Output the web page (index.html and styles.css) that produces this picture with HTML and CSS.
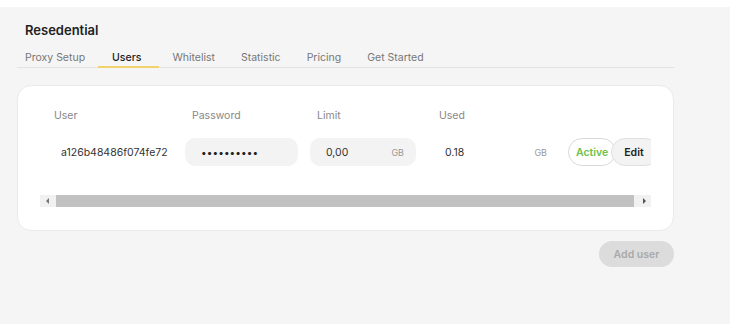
FILE: index.html
```html
<!DOCTYPE html>
<html lang="en">
<head>
    <meta charset="UTF-8">
    <meta name="viewport" content="width=device-width, initial-scale=1.0">
    <title>Resedential - Users</title>
    <link rel="stylesheet" href="styles.css">
</head>
<body>

    <div class="page">
        <div class="main">
            <!-- Titulo da secao -->
            <h2 class="title">Resedential</h2>

            <!-- Abas -->
            <nav class="tabs">
                <a class="tab first">Proxy Setup</a>
                <a class="tab active">Users</a>
                <a class="tab">Whitelist</a>
                <a class="tab">Statistic</a>
                <a class="tab">Pricing</a>
                <a class="tab">Get Started</a>
            </nav>

            <!-- Tabela de usuarios -->
            <div class="card">
                <div class="scroll">
                    <div class="table">
                        <div class="row head">
                            <div class="label">User</div>
                            <div class="label">Password</div>
                            <div class="label">Limit</div>
                            <div class="label">Used</div>
                            <div></div>
                        </div>
                        <div class="row">
                            <div class="cell user">a126b48486f074fe72</div>
                            <div class="cell field pass">••••••••••</div>
                            <div class="cell field limit">0,00 <span class="unit">GB</span></div>
                            <div class="cell used">0.18 <span class="unit">GB</span></div>
                            <div class="actions">
                                <button class="btn-active">Active</button>
                                <button class="btn-edit">Edit</button>
                            </div>
                        </div>
                    </div>
                </div>

                <!-- Barra de rolagem horizontal -->
                <div class="scrollbar">
                    <span class="arrow left"></span>
                    <span class="thumb"></span>
                    <span class="arrow right"></span>
                </div>
            </div>

            <div class="footer">
                <button class="add-user">Add user</button>
            </div>
        </div>
    </div>

</body>
</html>
```

FILE: styles.css
```css
body {
    margin: 0;
    padding: 0;
    background-color: #fff;
    font-family: 'Inter', 'Liberation Sans', sans-serif;
    color: #222;
}

/* Fundo cinza abaixo da faixa branca */
.page {
    margin-top: 7px;
    background-color: #f5f5f5;
    height: 317px;
    padding-top: 14px;
    box-sizing: border-box;
}

.main {
    width: 657px;
    margin-left: 17px;
}

.title {
    margin: 0;
    padding-left: 8px;
    font-size: 13px;
    font-weight: 600;
    line-height: 18px;
    color: #222;
}

/* Abas */
.tabs {
    display: flex;
    margin-top: 12px;
    border-bottom: 1px solid #e3e3e3;
}

.tab {
    padding: 0 13px 1px;
    font-size: 10.5px;
    line-height: 14px;
    color: #777;
    border-bottom: 2px solid transparent;
    margin-bottom: -1px;
}

.tab.first {
    padding-left: 8px;
}

.tab.active {
    color: #222;
    font-weight: 500;
    padding: 0 18px 1px 14px;
    border-bottom-color: #f0d46a;
}

/* Card branco com cantos arredondados */
.card {
    margin-top: 17px;
    background-color: #fff;
    border: 1px solid #eaeaea;
    border-radius: 14px;
    padding: 23px 22px 23px;
}

.scroll {
    overflow: hidden;
}

.table {
    padding-left: 7px;
}

.row {
    display: grid;
    grid-template-columns: 138px 125px 122px 136px auto;
    align-items: center;
}

.row.head {
    margin-bottom: 15px;
}

.label {
    font-size: 10.5px;
    line-height: 14px;
    color: #888;
    padding-left: 7px;
}

.cell {
    height: 28px;
    display: flex;
    align-items: center;
    box-sizing: border-box;
    font-size: 10.5px;
    color: #333;
}

.user {
    width: 128px;
    padding-left: 14px;
    box-shadow: 0 2px 0 #fafafa;
}

.field {
    background-color: #f3f3f3;
    border-radius: 10px;
    padding: 0 12px 0 16px;
}

.pass {
    width: 113px;
    letter-spacing: 0.1px;
    font-size: 10px;
    color: #222;
}

.limit {
    width: 106px;
    justify-content: space-between;
}

.used {
    width: 119px;
    padding: 0 4px 0 13px;
    justify-content: space-between;
    box-shadow: 0 2px 0 #fafafa;
}

.unit {
    font-size: 9px;
    color: #999;
}

.actions {
    display: flex;
    white-space: nowrap;
}

.actions button {
    height: 28px;
    font-family: inherit;
    font-size: 10.5px;
    font-weight: 600;
    border-radius: 14px;
}

.btn-active {
    background-color: #fff;
    border: 1px solid #d9d9d9;
    color: #6cc04a;
    padding: 0 7px;
}

.btn-edit {
    margin-left: -5px;
    background-color: #f3f3f3;
    border: 1px solid #e0e0e0;
    color: #222;
    padding: 0 14px 0 12px;
}

/* Barra de rolagem desenhada */
.scrollbar {
    display: flex;
    align-items: center;
    height: 12px;
    margin-top: 29px;
    background-color: #f1f1f1;
}

.arrow {
    width: 16px;
    height: 12px;
    position: relative;
}

.arrow::after {
    content: "";
    position: absolute;
    top: 3px;
    border-top: 3px solid transparent;
    border-bottom: 3px solid transparent;
}

.arrow.left::after {
    left: 6px;
    border-right: 3px solid #777;
}

.arrow.right::after {
    left: 8px;
    border-left: 3px solid #555;
}

.thumb {
    flex: 1;
    height: 12px;
    margin-right: 1px;
    background-color: #c1c1c1;
}

.footer {
    display: flex;
    justify-content: flex-end;
    margin-top: 10px;
}

.add-user {
    width: 75px;
    height: 26px;
    border: none;
    border-radius: 13px;
    background-color: #dcdcdc;
    color: #a9a9a9;
    font-family: inherit;
    font-size: 10.5px;
    font-weight: 600;
}
```
